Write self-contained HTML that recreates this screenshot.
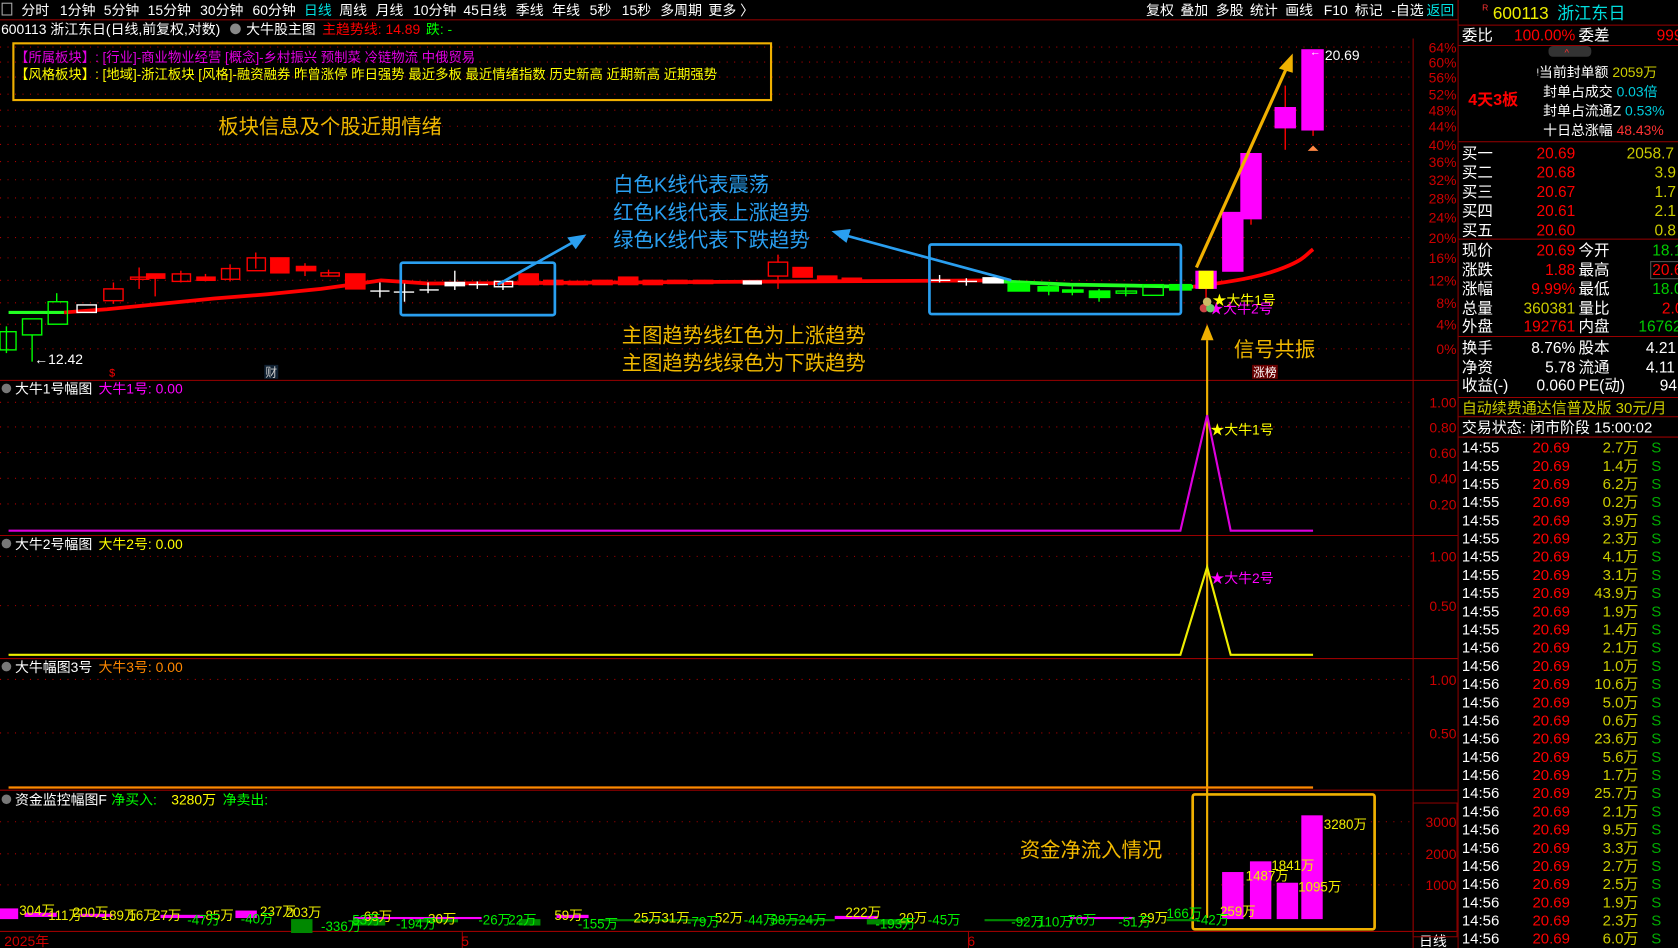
<!DOCTYPE html>
<html><head><meta charset="utf-8"><style>
html,body{margin:0;padding:0;background:#000;overflow:hidden}
svg{display:block}
text{font-family:"Liberation Sans","Noto Sans CJK SC",sans-serif;}
</style></head><body>
<svg width="1678" height="948" viewBox="0 0 1568 886" preserveAspectRatio="none" xmlns="http://www.w3.org/2000/svg">
<rect width="1568" height="886" fill="#000"/>
<!-- top menu -->
<g font-size="13" fill="#fff">
<rect x="2" y="3" width="9" height="11" fill="none" stroke="#aaa"/>
<text x="20" y="14">分时</text><text x="56" y="14">1分钟</text><text x="97" y="14">5分钟</text><text x="138" y="14">15分钟</text><text x="187" y="14">30分钟</text><text x="236" y="14">60分钟</text>
<text x="284" y="14" fill="#00e0e0">日线</text>
<text x="317" y="14">周线</text><text x="351" y="14">月线</text><text x="386" y="14">10分钟</text><text x="433" y="14">45日线</text><text x="482" y="14">季线</text><text x="516" y="14">年线</text><text x="551" y="14">5秒</text><text x="581" y="14">15秒</text><text x="617" y="14">多周期</text><text x="662" y="14">更多 〉</text>
<text x="1071" y="14">复权</text><text x="1103" y="14">叠加</text><text x="1136" y="14">多股</text><text x="1168" y="14">统计</text><text x="1201" y="14">画线</text><text x="1237" y="14">F10</text><text x="1266" y="14">标记</text><text x="1300" y="14">-自选</text>
<text x="1333" y="14" fill="#00e0e0">返回</text>
</g>
<line x1="0" y1="18.5" x2="1362" y2="18.5" stroke="#800" />
<g font-size="13">
<text x="1" y="32" fill="#fff">600113 浙江东日(日线,前复权,对数)</text>
<circle cx="220" cy="27" r="5" fill="#888"/>
<text x="230" y="32" fill="#fff">大牛股主图</text>
<text x="301" y="32" fill="#f00">主趋势线: 14.89</text>
<text x="398" y="32" fill="#0f0">跌: -</text>
</g>
<!-- right axis lines -->
<line x1="1320.5" y1="36" x2="1320.5" y2="886" stroke="#800"/>
<line x1="1362.5" y1="0" x2="1362.5" y2="886" stroke="#800"/>
<!-- dotted grid main -->
<g stroke="#a00" stroke-dasharray="1 6" stroke-width="1">
<line x1="0" y1="44" x2="1320" y2="44"/><line x1="0" y1="58" x2="1320" y2="58"/><line x1="0" y1="72" x2="1320" y2="72"/><line x1="0" y1="88" x2="1320" y2="88"/><line x1="0" y1="103" x2="1320" y2="103"/><line x1="0" y1="118" x2="1320" y2="118"/><line x1="0" y1="135" x2="1320" y2="135"/><line x1="0" y1="151" x2="1320" y2="151"/><line x1="0" y1="168" x2="1320" y2="168"/><line x1="0" y1="185" x2="1320" y2="185"/><line x1="0" y1="203" x2="1320" y2="203"/><line x1="0" y1="222" x2="1320" y2="222"/><line x1="0" y1="241" x2="1320" y2="241"/><line x1="0" y1="262" x2="1320" y2="262"/><line x1="0" y1="283" x2="1320" y2="283"/><line x1="0" y1="303" x2="1320" y2="303"/><line x1="0" y1="326" x2="1320" y2="326"/>
<line x1="0" y1="376" x2="1320" y2="376"/><line x1="0" y1="399" x2="1320" y2="399"/><line x1="0" y1="423" x2="1320" y2="423"/><line x1="0" y1="447" x2="1320" y2="447"/><line x1="0" y1="471" x2="1320" y2="471"/>
<line x1="0" y1="520" x2="1320" y2="520"/><line x1="0" y1="566" x2="1320" y2="566"/>
<line x1="0" y1="635" x2="1320" y2="635"/><line x1="0" y1="685" x2="1320" y2="685"/>
<line x1="0" y1="768" x2="1320" y2="768"/><line x1="0" y1="798" x2="1320" y2="798"/><line x1="0" y1="827" x2="1320" y2="827"/>
</g>
<g font-size="13" fill="#c00" text-anchor="end">
<text x="1361" y="49">64%</text><text x="1361" y="63">60%</text><text x="1361" y="77">56%</text><text x="1361" y="93">52%</text><text x="1361" y="108">48%</text><text x="1361" y="123">44%</text><text x="1361" y="140">40%</text><text x="1361" y="156">36%</text><text x="1361" y="173">32%</text><text x="1361" y="190">28%</text><text x="1361" y="208">24%</text><text x="1361" y="227">20%</text><text x="1361" y="246">16%</text><text x="1361" y="267">12%</text><text x="1361" y="288">8%</text><text x="1361" y="308">4%</text><text x="1361" y="331">0%</text>
<text x="1361" y="381">1.00</text><text x="1361" y="404">0.80</text><text x="1361" y="428">0.60</text><text x="1361" y="452">0.40</text><text x="1361" y="476">0.20</text>
<text x="1361" y="525">1.00</text><text x="1361" y="571">0.50</text>
<text x="1361" y="640">1.00</text><text x="1361" y="690">0.50</text>
<text x="1361" y="773">3000</text><text x="1361" y="803">2000</text><text x="1361" y="832">1000</text>
</g>
<!-- separators -->
<g stroke="#900">
<line x1="0" y1="355.5" x2="1362" y2="355.5"/><line x1="0" y1="500.5" x2="1362" y2="500.5"/><line x1="0" y1="615.5" x2="1362" y2="615.5"/><line x1="0" y1="738.5" x2="1362" y2="738.5"/><line x1="0" y1="870.5" x2="1362" y2="870.5"/>
<line x1="432" y1="870" x2="432" y2="886"/><line x1="905" y1="870" x2="905" y2="886"/>
</g>
<!-- info box -->
<rect x="12.5" y="40.5" width="708" height="53" fill="none" stroke="#f0b000" stroke-width="2"/>
<g font-size="12.5">
<text x="14" y="58" fill="#e000e0">【所属板块】:  [行业]-商业物业经营 [概念]-乡村振兴 预制菜 冷链物流 中俄贸易</text>
<text x="14" y="74" fill="#ff0">【风格板块】:  [地域]-浙江板块 [风格]-融资融券 昨曾涨停 昨日强势 最近多板 最近情绪指数 历史新高 近期新高 近期强势</text>
</g>
<g font-size="19">
<text x="204" y="125" fill="#f0b800">板块信息及个股近期情绪</text>
<text x="573" y="179" fill="#2a9ff0">白色K线代表震荡</text>
<text x="573" y="205" fill="#2a9ff0">红色K线代表上涨趋势</text>
<text x="573" y="231" fill="#2a9ff0">绿色K线代表下跌趋势</text>
<text x="581" y="320" fill="#f0b800">主图趋势线红色为上涨趋势</text>
<text x="581" y="346" fill="#f0b800">主图趋势线绿色为下跌趋势</text>
<text x="1153" y="333" fill="#f0b800">信号共振</text>
<text x="953" y="801" fill="#f0b800">资金净流入情况</text>
</g>
<!-- trend line -->
<polyline points="8,292 60,292" stroke="#2f2" stroke-width="3" fill="none"/>
<polyline points="60,292 100,289 150,284 200,279 250,275 300,270 350,263 356,262 400,265 935,262" stroke="#f00" stroke-width="3.5" fill="none"/>
<polyline points="935,263 1000,266 1060,267 1115,268" stroke="#2f2" stroke-width="3.5" fill="none"/>
<path d="M1115,268 C1160,262 1180,258 1200,250 S1220,238 1227,233" stroke="#f00" stroke-width="3.5" fill="none"/>
<!-- candles -->
<g stroke-width="1.3">
<g stroke="#0f0" fill="none">
<line x1="6" y1="305" x2="6" y2="330"/><rect x="0" y="310" width="15" height="17"/>
<line x1="30" y1="313" x2="30" y2="338"/><rect x="21" y="298" width="18" height="15"/>
<line x1="53" y1="274" x2="53" y2="282"/><rect x="45" y="282" width="18" height="21"/>
</g>
<rect x="72" y="285" width="18" height="7" fill="none" stroke="#fff"/>
<g stroke="#f00" fill="none">
<line x1="106" y1="264" x2="106" y2="284"/><rect x="97" y="270" width="18" height="11" fill="#000"/>
<line x1="130" y1="250" x2="130" y2="270"/><rect x="122" y="259" width="17" height="2"/>
<line x1="145" y1="256" x2="145" y2="277"/><rect x="137" y="256" width="17" height="4" fill="#f00"/>
<line x1="169" y1="253" x2="169" y2="264"/><rect x="161" y="256" width="17" height="7"/>
<line x1="192" y1="256" x2="192" y2="263"/><rect x="184" y="259" width="17" height="3" fill="#f00"/>
<line x1="215" y1="247" x2="215" y2="263"/><rect x="207" y="251" width="17" height="10"/>
<line x1="239" y1="236" x2="239" y2="251"/><rect x="231" y="241" width="17" height="12"/>
<rect x="253" y="241" width="17" height="14" fill="#f00"/>
<line x1="285" y1="246" x2="285" y2="258"/><rect x="277" y="249" width="18" height="4" fill="#f00"/>
<line x1="307" y1="252" x2="307" y2="258"/><rect x="300" y="255" width="17" height="3"/>
<rect x="323" y="256" width="18" height="14" fill="#f00"/>
</g>
<g stroke="#fff" fill="none">
<line x1="355" y1="264" x2="355" y2="278"/><line x1="346" y1="272" x2="364" y2="272"/>
<line x1="378" y1="265" x2="378" y2="282"/><line x1="368" y1="273" x2="387" y2="273"/>
<line x1="400" y1="264" x2="400" y2="274"/><line x1="392" y1="271" x2="410" y2="271"/>
<line x1="425" y1="253" x2="425" y2="271"/><rect x="416" y="264" width="18" height="3" fill="#fff"/>
<line x1="446" y1="263" x2="446" y2="270"/><line x1="438" y1="266" x2="456" y2="266"/>
<line x1="470" y1="262" x2="470" y2="271"/><rect x="462" y="263" width="17" height="5"/>
</g>
<g stroke="#f00" fill="#f00">
<rect x="485" y="256" width="18" height="10"/>
<rect x="508" y="262" width="18" height="4"/><rect x="531" y="263" width="18" height="3"/><rect x="554" y="262" width="18" height="4"/><rect x="578" y="259" width="18" height="7"/><rect x="601" y="262" width="18" height="4"/><rect x="624" y="262" width="18" height="3"/><rect x="648" y="262" width="18" height="3"/>
<line x1="727" y1="238" x2="727" y2="270"/><rect x="718" y="245" width="18" height="13" fill="#000"/>
<rect x="741" y="250" width="18" height="9"/><rect x="764" y="258" width="18" height="4"/><rect x="787" y="260" width="18" height="3"/>
</g>
<rect x="694" y="262" width="18" height="4" fill="#fff"/>
<g stroke="#fff"><line x1="878" y1="257" x2="878" y2="264"/><line x1="870" y1="262" x2="888" y2="262"/><line x1="903" y1="260" x2="903" y2="267"/><line x1="895" y1="263" x2="913" y2="263"/></g>
<rect x="918" y="259" width="20" height="6" fill="#fff"/>
<g stroke="#0f0" fill="#0f0">
<rect x="942" y="265" width="20" height="7"/><line x1="980" y1="265" x2="980" y2="276"/><rect x="970" y="268" width="19" height="4"/><line x1="1002" y1="267" x2="1002" y2="276"/><rect x="993" y="271" width="19" height="2"/><line x1="1027" y1="270" x2="1027" y2="282"/><rect x="1018" y="272" width="19" height="6"/>
<line x1="1052" y1="267" x2="1052" y2="277"/><rect x="1043" y="272" width="19" height="2" fill="none"/><rect x="1068" y="266" width="19" height="10" fill="none"/><rect x="1093" y="266" width="20" height="5"/>
</g>
<line x1="1127" y1="270" x2="1127" y2="285" stroke="#f00"/>
<rect x="1117" y="253" width="20" height="17" fill="#f0f"/><rect x="1120" y="253" width="14" height="17" fill="#ff0"/>
<rect x="1142" y="198" width="20" height="56" fill="#f0f"/>
<line x1="1169" y1="205" x2="1169" y2="210" stroke="#f00"/><rect x="1159" y="143" width="20" height="62" fill="#f0f"/>
<line x1="1201" y1="80" x2="1201" y2="140" stroke="#f00"/><rect x="1191" y="100" width="20" height="20" fill="#f0f"/>
<line x1="1227" y1="122" x2="1227" y2="127" stroke="#f00"/><rect x="1216" y="46" width="21" height="76" fill="#f0f"/>
<path d="M1222,141 L1227,136 L1232,141 Z" fill="#f84"/>
</g>
<text x="1238" y="56" font-size="13" fill="#fff">20.69</text>
<text x="1224" y="52" font-size="10" fill="#fff">←</text>
<text x="32" y="340" font-size="13" fill="#fff">←12.42</text>
<text x="102" y="352" font-size="10" fill="#f00">$</text>
<rect x="247" y="341" width="13" height="13" fill="#123"/><text x="248" y="352" font-size="11" fill="#ccc">财</text>
<rect x="1170" y="341" width="24" height="13" fill="#600"/><text x="1171" y="352" font-size="11" fill="#fff">涨榜</text>
<g font-size="13"><text x="1133" y="285" fill="#ff0">★大牛1号</text><text x="1130" y="293" fill="#f0f">★大牛2号</text></g>
<circle cx="1125" cy="288" r="4" fill="#c44"/><circle cx="1131" cy="288" r="4" fill="#6c6"/><circle cx="1128" cy="282" r="4" fill="#cb6"/>
<!-- blue boxes and arrows -->
<rect x="374.5" y="245.5" width="144" height="49" rx="2" fill="none" stroke="#2a9ff0" stroke-width="2.5"/>
<rect x="868.5" y="228.5" width="235" height="65" rx="2" fill="none" stroke="#2a9ff0" stroke-width="2.5"/>
<line x1="465" y1="266" x2="538" y2="225" stroke="#2a9ff0" stroke-width="2.5"/><path d="M548,219 L530,222 L538,233 Z" fill="#2a9ff0"/>
<line x1="945" y1="262" x2="790" y2="220" stroke="#2a9ff0" stroke-width="2.5"/><path d="M777,216 L795,214 L791,227 Z" fill="#2a9ff0"/>
<!-- orange arrows -->
<line x1="1118" y1="250" x2="1202" y2="64" stroke="#f0b000" stroke-width="3"/><path d="M1208,50 L1195,64 L1208,68 Z" fill="#f0b000"/>
<line x1="1128" y1="318" x2="1128" y2="858" stroke="#f0b000" stroke-width="2"/><path d="M1128,303 L1122,318 L1134,318 Z" fill="#f0b000"/>
<!-- sub panel titles -->
<g font-size="13">
<circle cx="6" cy="363" r="4.5" fill="#777"/><text x="14" y="368" fill="#fff">大牛1号幅图</text><text x="92" y="368" fill="#f0f">大牛1号: 0.00</text>
<circle cx="6" cy="508" r="4.5" fill="#777"/><text x="14" y="513" fill="#fff">大牛2号幅图</text><text x="92" y="513" fill="#ff0">大牛2号: 0.00</text>
<circle cx="6" cy="623" r="4.5" fill="#777"/><text x="14" y="628" fill="#fff">大牛幅图3号</text><text x="92" y="628" fill="#f80">大牛3号: 0.00</text>
<circle cx="6" cy="747" r="4.5" fill="#777"/><text x="14" y="752" fill="#fff">资金监控幅图F</text><text x="104" y="752" fill="#0f0">净买入:</text><text x="160" y="752" fill="#ff0">3280万</text><text x="208" y="752" fill="#0f0">净卖出:</text>
</g>
<polyline points="8,496 1103,496 1128,388 1150,496 1227,496" stroke="#d0d" stroke-width="2" fill="none"/>
<polyline points="8,612 1103,612 1128,530 1150,612 1227,612" stroke="#ee0" stroke-width="2" fill="none"/>
<line x1="8" y1="736" x2="1227" y2="736" stroke="#f80" stroke-width="2"/>
<text x="1131" y="406" font-size="13" fill="#ff0">★大牛1号</text>
<text x="1131" y="545" font-size="13" fill="#f0f">★大牛2号</text>
<!-- capital bars -->
<rect x="1114.5" y="742.5" width="170" height="126" fill="none" stroke="#f0b000" stroke-width="2.5" rx="2"/>
<g fill="#f0f">
<rect x="1142" y="815" width="20" height="44"/><rect x="1168" y="805" width="20" height="54"/><rect x="1193" y="825" width="20" height="34"/><rect x="1216" y="762" width="20" height="97"/>
<rect x="0" y="849" width="17" height="10"/><rect x="23" y="853" width="30" height="4"/><rect x="75" y="854" width="30" height="3"/><rect x="150" y="855" width="40" height="3"/><rect x="220" y="851" width="20" height="7"/><rect x="330" y="857" width="120" height="2"/><rect x="520" y="855" width="30" height="3"/><rect x="780" y="856" width="40" height="3"/><rect x="1000" y="857" width="60" height="2"/>
</g>
<g fill="#080">
<rect x="272" y="859" width="20" height="13"/><rect x="330" y="859" width="30" height="6"/><rect x="388" y="859" width="40" height="3"/><rect x="485" y="859" width="20" height="6"/><rect x="560" y="859" width="100" height="2"/><rect x="720" y="859" width="60" height="2"/><rect x="810" y="859" width="40" height="5"/><rect x="920" y="859" width="40" height="2"/><rect x="1090" y="859" width="30" height="2"/>
</g>
<g font-size="12.5" fill="#ee0">
<text x="18" y="855">304万</text><text x="45" y="860">111万</text><text x="68" y="857">200万</text><text x="95" y="860">189万</text><text x="120" y="860">16万</text><text x="143" y="860">27万</text><text x="192" y="860">85万</text><text x="243" y="856">237万</text><text x="267" y="857">203万</text><text x="340" y="861">63万</text><text x="400" y="863">30万</text><text x="518" y="860">59万</text><text x="592" y="862">25万</text><text x="618" y="862">31万</text><text x="668" y="862">52万</text><text x="790" y="857">222万</text><text x="840" y="862">20万</text><text x="1065" y="862">29万</text>
<text x="1237" y="775">3280万</text><text x="1188" y="813">1841万</text><text x="1164" y="823">1487万</text><text x="1213" y="833">1095万</text><text x="1140" y="856">259万</text>
</g>
<g font-size="12.5" fill="#0e0">
<text x="175" y="864">-47万</text><text x="225" y="863">-40万</text><text x="300" y="870">-336万</text><text x="325" y="864">-53万</text><text x="370" y="868">-194万</text><text x="447" y="864">-26万</text><text x="475" y="864">22万</text><text x="540" y="868">-155万</text><text x="642" y="866">-79万</text><text x="695" y="864">-44万</text><text x="720" y="864">38万</text><text x="746" y="864">24万</text><text x="818" y="868">-193万</text><text x="867" y="864">-45万</text><text x="945" y="866">-92万</text><text x="970" y="866">110万</text><text x="998" y="864">76万</text><text x="1045" y="866">-51万</text><text x="1090" y="858">166万</text><text x="1118" y="864">-42万</text>
</g>
<!-- bottom axis -->
<g font-size="13" fill="#c00"><text x="4" y="884">2025年</text><text x="431" y="884">5</text><text x="904" y="884">6</text></g>
<text x="1326" y="884" font-size="13" fill="#fff">日线</text>
<rect x="1320.5" y="750.5" width="41" height="125" fill="none" stroke="#800"/>
<!-- right panel -->
<g font-size="14">
<text x="1385" y="10" font-size="8" fill="#f33">R</text>
<text x="1395" y="18" font-size="16" fill="#ee0">600113</text><text x="1455" y="18" font-size="16" fill="#0dd">浙江东日</text>
</g>
<g stroke="#900">
<line x1="1363" y1="23.5" x2="1568" y2="23.5"/><line x1="1363" y1="42.5" x2="1568" y2="42.5"/><line x1="1363" y1="132.5" x2="1568" y2="132.5"/><line x1="1363" y1="223.5" x2="1568" y2="223.5"/><line x1="1363" y1="314.5" x2="1568" y2="314.5"/><line x1="1363" y1="371.5" x2="1568" y2="371.5"/><line x1="1363" y1="389.5" x2="1568" y2="389.5"/><line x1="1363" y1="408.5" x2="1568" y2="408.5"/>
</g>
<rect x="1447" y="43" width="40" height="10" rx="4" fill="#333"/><text x="1462" y="52" font-size="9" fill="#f33">^</text>
<g font-size="14.5">
<text x="1366" y="38" fill="#fff">委比</text><text x="1472" y="38" fill="#f00" text-anchor="end">100.00%</text><text x="1475" y="38" fill="#fff">委差</text><text x="1548" y="38" fill="#f00">999</text>
<text x="1372" y="98" font-weight="bold" fill="#f00" font-size="15">4天3板</text>
</g>
<g font-size="13">
<text x="1436" y="72" fill="#fff">ᵎ当前封单额 <tspan fill="#cc0">2059万</tspan></text>
<text x="1442" y="90" fill="#fff">封单占成交 <tspan fill="#0cd">0.03倍</tspan></text>
<text x="1442" y="108" fill="#fff">封单占流通Z <tspan fill="#0cd">0.53%</tspan></text>
<text x="1442" y="126" fill="#fff">十日总涨幅 <tspan fill="#f33">48.43%</tspan></text>
</g>
<g font-size="14.5" fill="#fff">
<text x="1366" y="148">买一</text><text x="1366" y="166">买二</text><text x="1366" y="184">买三</text><text x="1366" y="202">买四</text><text x="1366" y="220">买五</text>
<text x="1366" y="239">现价</text><text x="1366" y="257">涨跌</text><text x="1366" y="275">涨幅</text><text x="1366" y="293">总量</text><text x="1366" y="310">外盘</text>
<text x="1475" y="239">今开</text><text x="1475" y="257">最高</text><text x="1475" y="275">最低</text><text x="1475" y="293">量比</text><text x="1475" y="310">内盘</text>
<text x="1366" y="330">换手</text><text x="1366" y="348">净资</text><text x="1366" y="365">收益(-)</text>
<text x="1472" y="330" text-anchor="end">8.76%</text><text x="1472" y="348" text-anchor="end">5.78</text><text x="1472" y="365" text-anchor="end">0.060</text>
<text x="1475" y="330">股本</text><text x="1475" y="348">流通</text><text x="1475" y="365">PE(动)</text>
<text x="1538" y="330">4.21</text><text x="1538" y="348">4.11</text><text x="1551" y="365">94</text>
</g>
<g font-size="14.5" text-anchor="end" fill="#f00">
<text x="1472" y="148">20.69</text><text x="1472" y="166">20.68</text><text x="1472" y="184">20.67</text><text x="1472" y="202">20.61</text><text x="1472" y="220">20.60</text>
<text x="1472" y="239">20.69</text><text x="1472" y="257">1.88</text><text x="1472" y="275">9.99%</text><text x="1472" y="293" fill="#cc0">360381</text><text x="1472" y="310">192761</text>
</g>
<g font-size="14.5" fill="#cc0">
<text x="1520" y="148">2058.7</text><text x="1546" y="166">3.9</text><text x="1546" y="184">1.7</text><text x="1546" y="202">2.1</text><text x="1546" y="220">0.8</text>
<text x="1544" y="239" fill="#0c0">18.1</text><text x="1544" y="257" fill="#f00">20.6</text><text x="1544" y="275" fill="#0c0">18.0</text><text x="1553" y="293" fill="#f00">2.0</text><text x="1531" y="310" fill="#0c0">16762</text>
</g>
<rect x="1542.5" y="244.5" width="30" height="16" fill="none" stroke="#555"/>
<text x="1366" y="386" font-size="14" fill="#cc0">自动续费通达信普及版  30元/月</text>
<text x="1366" y="404" font-size="14" fill="#fff">交易状态: 闭市阶段 15:00:02</text>
<g font-size="14">
<g fill="#fff">
<text x="1366" y="423">14:55</text><text x="1366" y="440">14:55</text><text x="1366" y="457">14:55</text><text x="1366" y="474">14:55</text><text x="1366" y="491">14:55</text><text x="1366" y="508">14:55</text><text x="1366" y="525">14:55</text><text x="1366" y="542">14:55</text><text x="1366" y="559">14:55</text><text x="1366" y="576">14:55</text><text x="1366" y="593">14:55</text><text x="1366" y="610">14:56</text><text x="1366" y="627">14:56</text><text x="1366" y="644">14:56</text><text x="1366" y="661">14:56</text><text x="1366" y="678">14:56</text><text x="1366" y="695">14:56</text><text x="1366" y="712">14:56</text><text x="1366" y="729">14:56</text><text x="1366" y="746">14:56</text><text x="1366" y="763">14:56</text><text x="1366" y="780">14:56</text><text x="1366" y="797">14:56</text><text x="1366" y="814">14:56</text><text x="1366" y="831">14:56</text><text x="1366" y="848">14:56</text><text x="1366" y="865">14:56</text><text x="1366" y="882">14:56</text>
</g>
<g fill="#f00">
<text x="1432" y="423">20.69</text><text x="1432" y="440">20.69</text><text x="1432" y="457">20.69</text><text x="1432" y="474">20.69</text><text x="1432" y="491">20.69</text><text x="1432" y="508">20.69</text><text x="1432" y="525">20.69</text><text x="1432" y="542">20.69</text><text x="1432" y="559">20.69</text><text x="1432" y="576">20.69</text><text x="1432" y="593">20.69</text><text x="1432" y="610">20.69</text><text x="1432" y="627">20.69</text><text x="1432" y="644">20.69</text><text x="1432" y="661">20.69</text><text x="1432" y="678">20.69</text><text x="1432" y="695">20.69</text><text x="1432" y="712">20.69</text><text x="1432" y="729">20.69</text><text x="1432" y="746">20.69</text><text x="1432" y="763">20.69</text><text x="1432" y="780">20.69</text><text x="1432" y="797">20.69</text><text x="1432" y="814">20.69</text><text x="1432" y="831">20.69</text><text x="1432" y="848">20.69</text><text x="1432" y="865">20.69</text><text x="1432" y="882">20.69</text>
</g>
<g fill="#cc0" text-anchor="end">
<text x="1531" y="423">2.7万</text><text x="1531" y="440">1.4万</text><text x="1531" y="457">6.2万</text><text x="1531" y="474">0.2万</text><text x="1531" y="491">3.9万</text><text x="1531" y="508">2.3万</text><text x="1531" y="525">4.1万</text><text x="1531" y="542">3.1万</text><text x="1531" y="559">43.9万</text><text x="1531" y="576">1.9万</text><text x="1531" y="593">1.4万</text><text x="1531" y="610">2.1万</text><text x="1531" y="627">1.0万</text><text x="1531" y="644">10.6万</text><text x="1531" y="661">5.0万</text><text x="1531" y="678">0.6万</text><text x="1531" y="695">23.6万</text><text x="1531" y="712">5.6万</text><text x="1531" y="729">1.7万</text><text x="1531" y="746">25.7万</text><text x="1531" y="763">2.1万</text><text x="1531" y="780">9.5万</text><text x="1531" y="797">3.3万</text><text x="1531" y="814">2.7万</text><text x="1531" y="831">2.5万</text><text x="1531" y="848">1.9万</text><text x="1531" y="865">2.3万</text><text x="1531" y="882">6.0万</text>
</g>
<g fill="#0a0">
<text x="1543" y="423">S</text><text x="1543" y="440">S</text><text x="1543" y="457">S</text><text x="1543" y="474">S</text><text x="1543" y="491">S</text><text x="1543" y="508">S</text><text x="1543" y="525">S</text><text x="1543" y="542">S</text><text x="1543" y="559">S</text><text x="1543" y="576">S</text><text x="1543" y="593">S</text><text x="1543" y="610">S</text><text x="1543" y="627">S</text><text x="1543" y="644">S</text><text x="1543" y="661">S</text><text x="1543" y="678">S</text><text x="1543" y="695">S</text><text x="1543" y="712">S</text><text x="1543" y="729">S</text><text x="1543" y="746">S</text><text x="1543" y="763">S</text><text x="1543" y="780">S</text><text x="1543" y="797">S</text><text x="1543" y="814">S</text><text x="1543" y="831">S</text><text x="1543" y="848">S</text><text x="1543" y="865">S</text><text x="1543" y="882">S</text>
</g>
</g>
</svg>
</body></html>
